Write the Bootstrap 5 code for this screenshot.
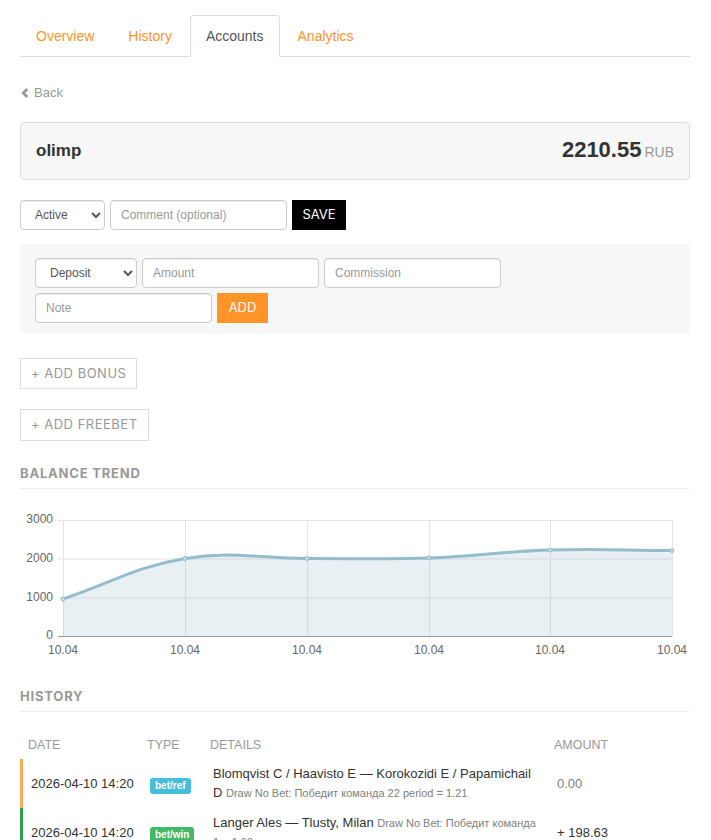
<!DOCTYPE html>
<html lang="en">

<head>
    <meta charset="UTF-8">
    <meta name="viewport" content="width=device-width, initial-scale=1.0">
    <title>Accounts</title>
    <link href="https://cdn.jsdelivr.net/npm/bootstrap@5.3.0/dist/css/bootstrap.min.css" rel="stylesheet">
    <style>
        html, body { overflow: hidden; }
        body { font-family: "Liberation Sans", Arial, sans-serif; font-size: 13px; line-height: 20px; color: #333; }
        .page-wrap { padding: 15px 21px 0 20px; }

        .nav-tabs { border-bottom: 1px solid #ddd; }
        .nav-tabs .nav-link { font-size: 14px; line-height: 20px; padding: 10px 15px; margin-right: 2px; color: #ff9429; border-radius: 4px 4px 0 0; }
        .nav-tabs .nav-link.active { color: #555; border-color: #ddd #ddd #fff; }

        .back-link { display: block; margin-top: 26px; color: #999; text-decoration: none; line-height: 20px; }
        .back-link svg { vertical-align: -1px; margin: 0 5px 0 1px; }

        .acct-head { margin-top: 19px; height: 58px; padding: 0 15px; background: #f7f7f7; border: 1px solid #ddd; border-radius: 4px; }
        .acct-name { font-size: 17px; font-weight: 700; color: #333; }
        .acct-sum { font-size: 22px; font-weight: 700; color: #333; }
        .acct-cur { font-size: 14px; color: #999; margin-left: 3px; }

        .field-sm { height: 30px; padding: 5px 10px; font-size: 12px; line-height: 18px; color: #555; background-color: #fff; border: 1px solid #ccc; border-radius: 4px; box-shadow: inset 0 1px 1px rgba(0,0,0,.075); }
        .field-sm::placeholder { color: #999; opacity: 1; }
        .field-text { width: 177px; }
        select.field-sm { appearance: auto; -webkit-appearance: menulist; }
        .sel-status { width: 85px; }
        .sel-type { width: 102px; }

        .btn-save, .btn-add { height: 30px; padding: 0; border: 0; border-radius: 0; font-family: "Inter", "Liberation Sans", sans-serif; font-size: 13px; font-weight: 400; color: #fff; }
        .btn-save { width: 54px; background: #000; }
        .btn-add { width: 51px; background: #ff9429; }
        .btn-save:hover { background: #000; color: #fff; }
        .btn-add:hover { background: #ff9429; color: #fff; }

        .add-box { margin-top: 14px; width: 670px; height: 89px; padding: 14px 15px; background: #f7f7f7; border-radius: 3px; }
        .add-line { height: 30px; margin-bottom: 5px; }

        .btn-ghost { display: block; width: fit-content; padding: 0 10px; border: 1px solid #ddd; border-radius: 0; background: #fff; color: #999; font-family: "Inter", "Liberation Sans", sans-serif; font-size: 13px; font-weight: 400; line-height: 29.4px; letter-spacing: .5px; }

        .sect-title { margin: 0; padding-bottom: 6px; border-bottom: 1px solid #eee; font-family: "Inter", "Liberation Sans", sans-serif; font-size: 13px; font-weight: 700; line-height: 18px; letter-spacing: .8px; color: #999; }

        .chart-svg { display: block; margin-top: 18px; }
        .chart-svg text { font-family: "Liberation Sans", Arial, sans-serif; font-size: 12px; fill: #666; }

        .hist-table { width: 670px; margin-top: 20px; table-layout: fixed; border-collapse: separate; border-spacing: 0; --bs-table-bg: transparent; }
        .hist-table th { padding: 3px 8px 4px; border: 0; font-size: 12.5px; font-weight: 400; line-height: 20px; color: #999; }
        .hist-table td { padding: 6px 8px 6px 11px; border: 0; vertical-align: middle; font-size: 13px; line-height: 18.57px; color: #333; }
        .hist-table td:first-child { padding: 7px 0 5px 8px; white-space: nowrap; }
        .hist-table td.cell-tag { padding-top: 8px; padding-bottom: 4px; }
        .hist-table td.cell-amt { padding-top: 7px; padding-bottom: 5px; }
        .hist-table td.amt-zero { color: #808080; }
        .row-ref td:first-child { border-left: 3px solid #ffad5a; }
        .row-win td:first-child { border-left: 3px solid #2ba14f; }
        .tag { display: inline-block; padding: 2px 5px; border-radius: 3px; font-size: 10px; font-weight: 700; line-height: 12px; color: #fff; }
        .tag-ref { background: #46bddb; }
        .tag-win { background: #43b866; }
        .bet-note { font-size: 11px; color: #808080; }
    </style>
</head>

<body>
    <div class="page-wrap">
        <ul class="nav nav-tabs">
            <li class="nav-item"><a class="nav-link" href="#">Overview</a></li>
            <li class="nav-item"><a class="nav-link" href="#">History</a></li>
            <li class="nav-item"><a class="nav-link active" href="#">Accounts</a></li>
            <li class="nav-item"><a class="nav-link" href="#">Analytics</a></li>
        </ul>

        <a class="back-link" href="#"><svg width="8" height="10" viewBox="0 0 8 10"><path d="M6.3 1 2.3 5l4 4" fill="none" stroke="#999" stroke-width="2.8"/></svg>Back</a>

        <div class="acct-head d-flex justify-content-between align-items-center">
            <span class="acct-name">olimp</span>
            <span><span class="acct-sum">2210.55</span><span class="acct-cur">RUB</span></span>
        </div>

        <form class="d-flex mt-3 pt-1" style="gap:5px">
            <select class="field-sm sel-status"><option>Active</option></select>
            <input class="form-control field-sm field-text" placeholder="Comment (optional)">
            <button type="button" class="btn btn-save">SAVE</button>
        </form>

        <div class="add-box">
            <div class="d-flex add-line" style="gap:5px">
                <select class="field-sm sel-type"><option>Deposit</option></select>
                <input class="form-control field-sm field-text" placeholder="Amount">
                <input class="form-control field-sm field-text" placeholder="Commission">
            </div>
            <div class="d-flex add-line" style="gap:5px">
                <input class="form-control field-sm field-text" placeholder="Note">
                <button type="button" class="btn btn-add">ADD</button>
            </div>
        </div>

        <button type="button" class="btn btn-ghost" style="margin-top:25px">+ ADD BONUS</button>
        <button type="button" class="btn btn-ghost" style="margin-top:20px">+ ADD FREEBET</button>

        <h5 class="sect-title" style="margin-top:23.2px">BALANCE TREND</h5>

        <svg class="chart-svg" width="670" height="160" viewBox="20 507 670 160">
            <g stroke="#e4e4e4" stroke-width="1">
                <path d="M63.5 520V636M185.5 520V636M307.5 520V636M429.5 520V636M550.5 520V636M672.5 520V636"/>
                <path d="M58 520.5H672M58 559H672M58 598H672"/>
            </g>
            <path d="M63 599C111.8 582.8 135.2 566.8 185 558.5C232.8 550.6 258.2 558.6 307 558.5C355.8 558.4 380.4 559.7 429 558C477.6 556.3 501.4 551.5 550 550C598.6 548.5 623.2 550.3 672 550.5V636H63Z" fill="#94bccd" fill-opacity=".22"/>
            <path d="M63 599C111.8 582.8 135.2 566.8 185 558.5C232.8 550.6 258.2 558.6 307 558.5C355.8 558.4 380.4 559.7 429 558C477.6 556.3 501.4 551.5 550 550C598.6 548.5 623.2 550.3 672 550.5" fill="none" stroke="#94bccd" stroke-width="3"/>
            <g fill="#c5dde8" stroke="#94bccd" stroke-width="1">
                <circle cx="63" cy="599" r="2"/><circle cx="185" cy="558.5" r="2"/><circle cx="307" cy="558.5" r="2"/>
                <circle cx="429" cy="558" r="2"/><circle cx="550" cy="550" r="2"/><circle cx="672" cy="550.5" r="2"/>
            </g>
            <path d="M58 636.5H672" stroke="#999" stroke-width="1"/>
            <g text-anchor="end">
                <text x="53" y="523">3000</text><text x="53" y="562">2000</text><text x="53" y="601">1000</text><text x="53" y="639">0</text>
            </g>
            <g text-anchor="middle">
                <text x="63" y="654">10.04</text><text x="185" y="654">10.04</text><text x="307" y="654">10.04</text>
                <text x="429" y="654">10.04</text><text x="550" y="654">10.04</text><text x="672" y="654">10.04</text>
            </g>
        </svg>

        <h5 class="sect-title" style="margin-top:20px">HISTORY</h5>

        <table class="table hist-table">
            <colgroup><col style="width:119px"><col style="width:63px"><col style="width:344px"><col style="width:144px"></colgroup>
            <thead>
                <tr><th>DATE</th><th>TYPE</th><th>DETAILS</th><th>AMOUNT</th></tr>
            </thead>
            <tbody>
                <tr class="row-ref">
                    <td>2026-04-10 14:20</td>
                    <td class="cell-tag"><span class="tag tag-ref">bet/ref</span></td>
                    <td>Blomqvist C / Haavisto E — Korokozidi E / Papamichail D <span class="bet-note">Draw No Bet: Победит команда 22 period = 1.21</span></td>
                    <td class="cell-amt amt-zero">0.00</td>
                </tr>
                <tr class="row-win">
                    <td>2026-04-10 14:20</td>
                    <td class="cell-tag"><span class="tag tag-win">bet/win</span></td>
                    <td>Langer Ales — Tlusty, Milan <span class="bet-note">Draw No Bet: Победит команда 1 = 1.60</span></td>
                    <td class="cell-amt">+ 198.63</td>
                </tr>
            </tbody>
        </table>
    </div>

    <script src="https://cdn.jsdelivr.net/npm/bootstrap@5.3.0/dist/js/bootstrap.bundle.min.js"></script>
</body>

</html>
